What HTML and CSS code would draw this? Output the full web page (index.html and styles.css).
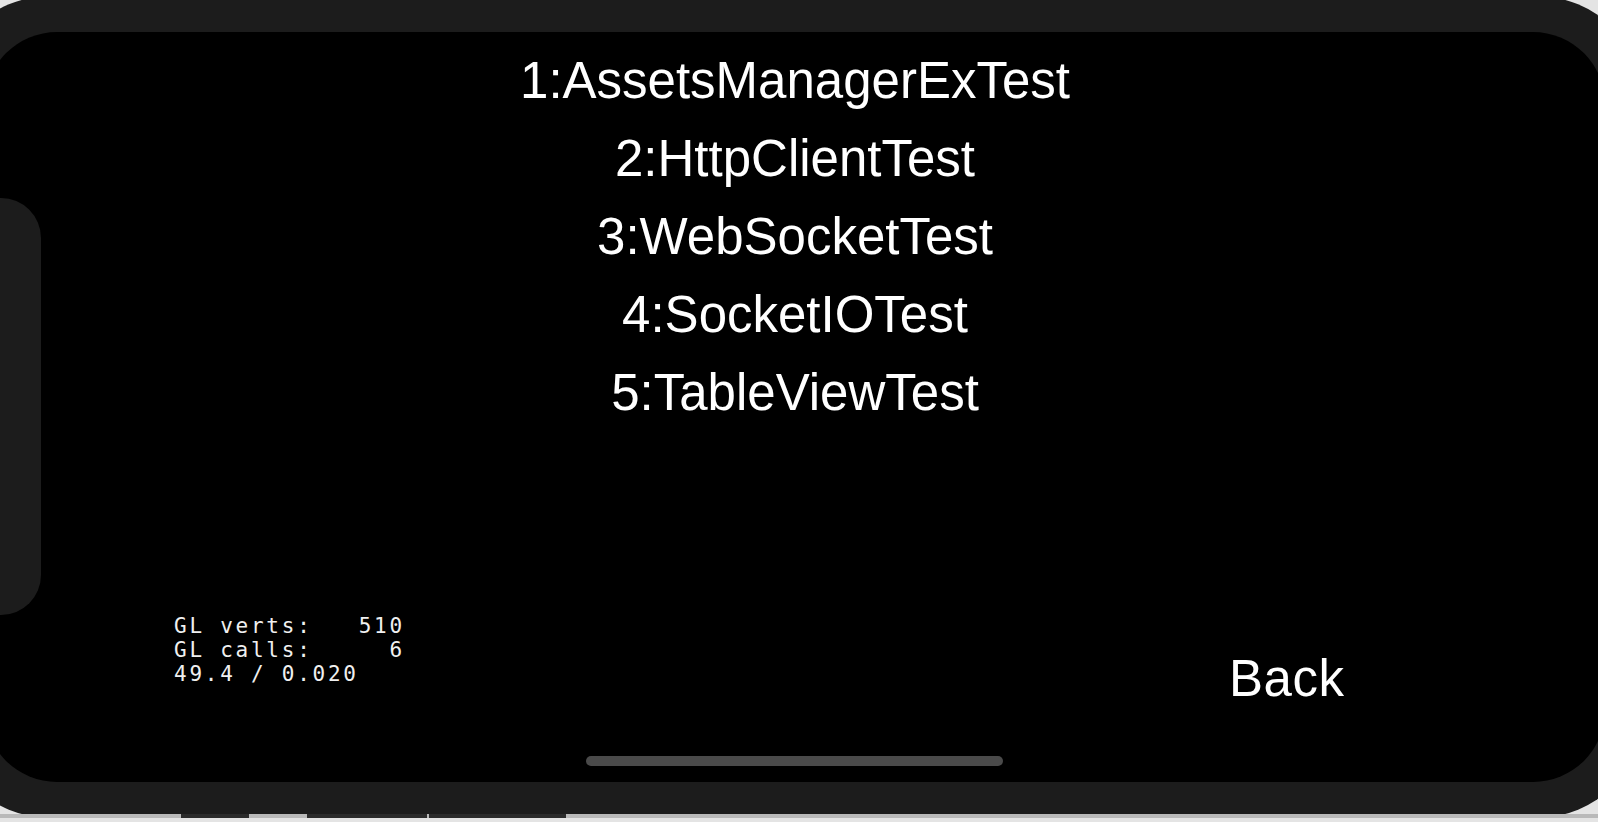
FILE: index.html
```html
<!DOCTYPE html>
<html>
<head>
<meta charset="utf-8">
<link rel="stylesheet" href="styles.css">
</head>
<body>
<div class="device">
  <div class="screen">
    <div class="notch"></div>
    <ul class="menu">
      <li>1:AssetsManagerExTest</li>
      <li>2:HttpClientTest</li>
      <li>3:WebSocketTest</li>
      <li>4:SocketIOTest</li>
      <li>5:TableViewTest</li>
    </ul>
    <div class="footer">
      <pre class="stats">GL verts:   510
GL calls:     6
49.4 / 0.020</pre>
      <div class="back">Back</div>
    </div>
    <div class="home-indicator"></div>
  </div>
</div>
<div class="strip">
  <span class="seg light w1"></span>
  <span class="seg dark w2"></span>
  <span class="seg light w3"></span>
  <span class="seg dark w4"></span>
  <span class="seg dark w5"></span>
</div>
</body>
</html>
```
FILE: styles.css
```css
html, body {
  margin: 0;
  padding: 0;
}
body {
  width: 1598px;
  height: 822px;
  overflow: hidden;
  background: #e4e4e4;
  font-family: "Liberation Sans", Arial, sans-serif;
}
.device {
  box-sizing: border-box;
  width: 1705px;
  height: 822px;
  margin-left: -59px;
  margin-top: -4px;
  padding-top: 36px;
  padding-left: 44px;
  background: #1c1c1c;
  border-radius: 110px;
}
.screen {
  position: relative;
  width: 1620px;
  height: 750px;
  background: #000;
  border-radius: 72px;
  display: flex;
  flex-direction: column;
}
.notch {
  position: absolute;
  left: 0;
  top: 166px;
  width: 56px;
  height: 417px;
  background: #1c1c1c;
  border-radius: 0 40px 40px 0;
}
.menu {
  list-style: none;
  margin: 0;
  padding: 10px 0 0 0;
  display: flex;
  flex-direction: column;
  align-items: center;
  color: #fff;
  font-size: 51px;
  line-height: 78px;
}
.menu li {
  white-space: nowrap;
}
.footer {
  margin-top: auto;
  margin-bottom: 47px;
  display: grid;
  grid-template-columns: 1055px auto;
  padding-left: 189px;
  align-items: start;
}
.stats {
  margin: 0;
  color: #f0f0f0;
  font-family: "DejaVu Sans Mono", monospace;
  font-size: 21px;
  letter-spacing: 2.75px;
  line-height: 24px;
  white-space: pre;
}
.back {
  margin-top: 35px;
  color: #fff;
  font-size: 51px;
  line-height: 60px;
  letter-spacing: 0.5px;
}
.home-indicator {
  align-self: center;
  width: 417px;
  height: 10px;
  margin-bottom: 16px;
  margin-left: -1px;
  background: #4a4a4a;
  border-radius: 5px;
}
.strip {
  display: flex;
  height: 4px;
  margin-top: -4px;
  background: #b9b9b9;
}
.seg {
  display: block;
  height: 4px;
}
.light { background: #b9b9b9; }
.dark { background: #2b2b2b; }
.w1 { width: 181px; }
.w2 { width: 68px; margin-right: 58px; }
.w3 { width: 0; }
.w4 { width: 120px; margin-right: 2px; }
.w5 { width: 137px; }
```
